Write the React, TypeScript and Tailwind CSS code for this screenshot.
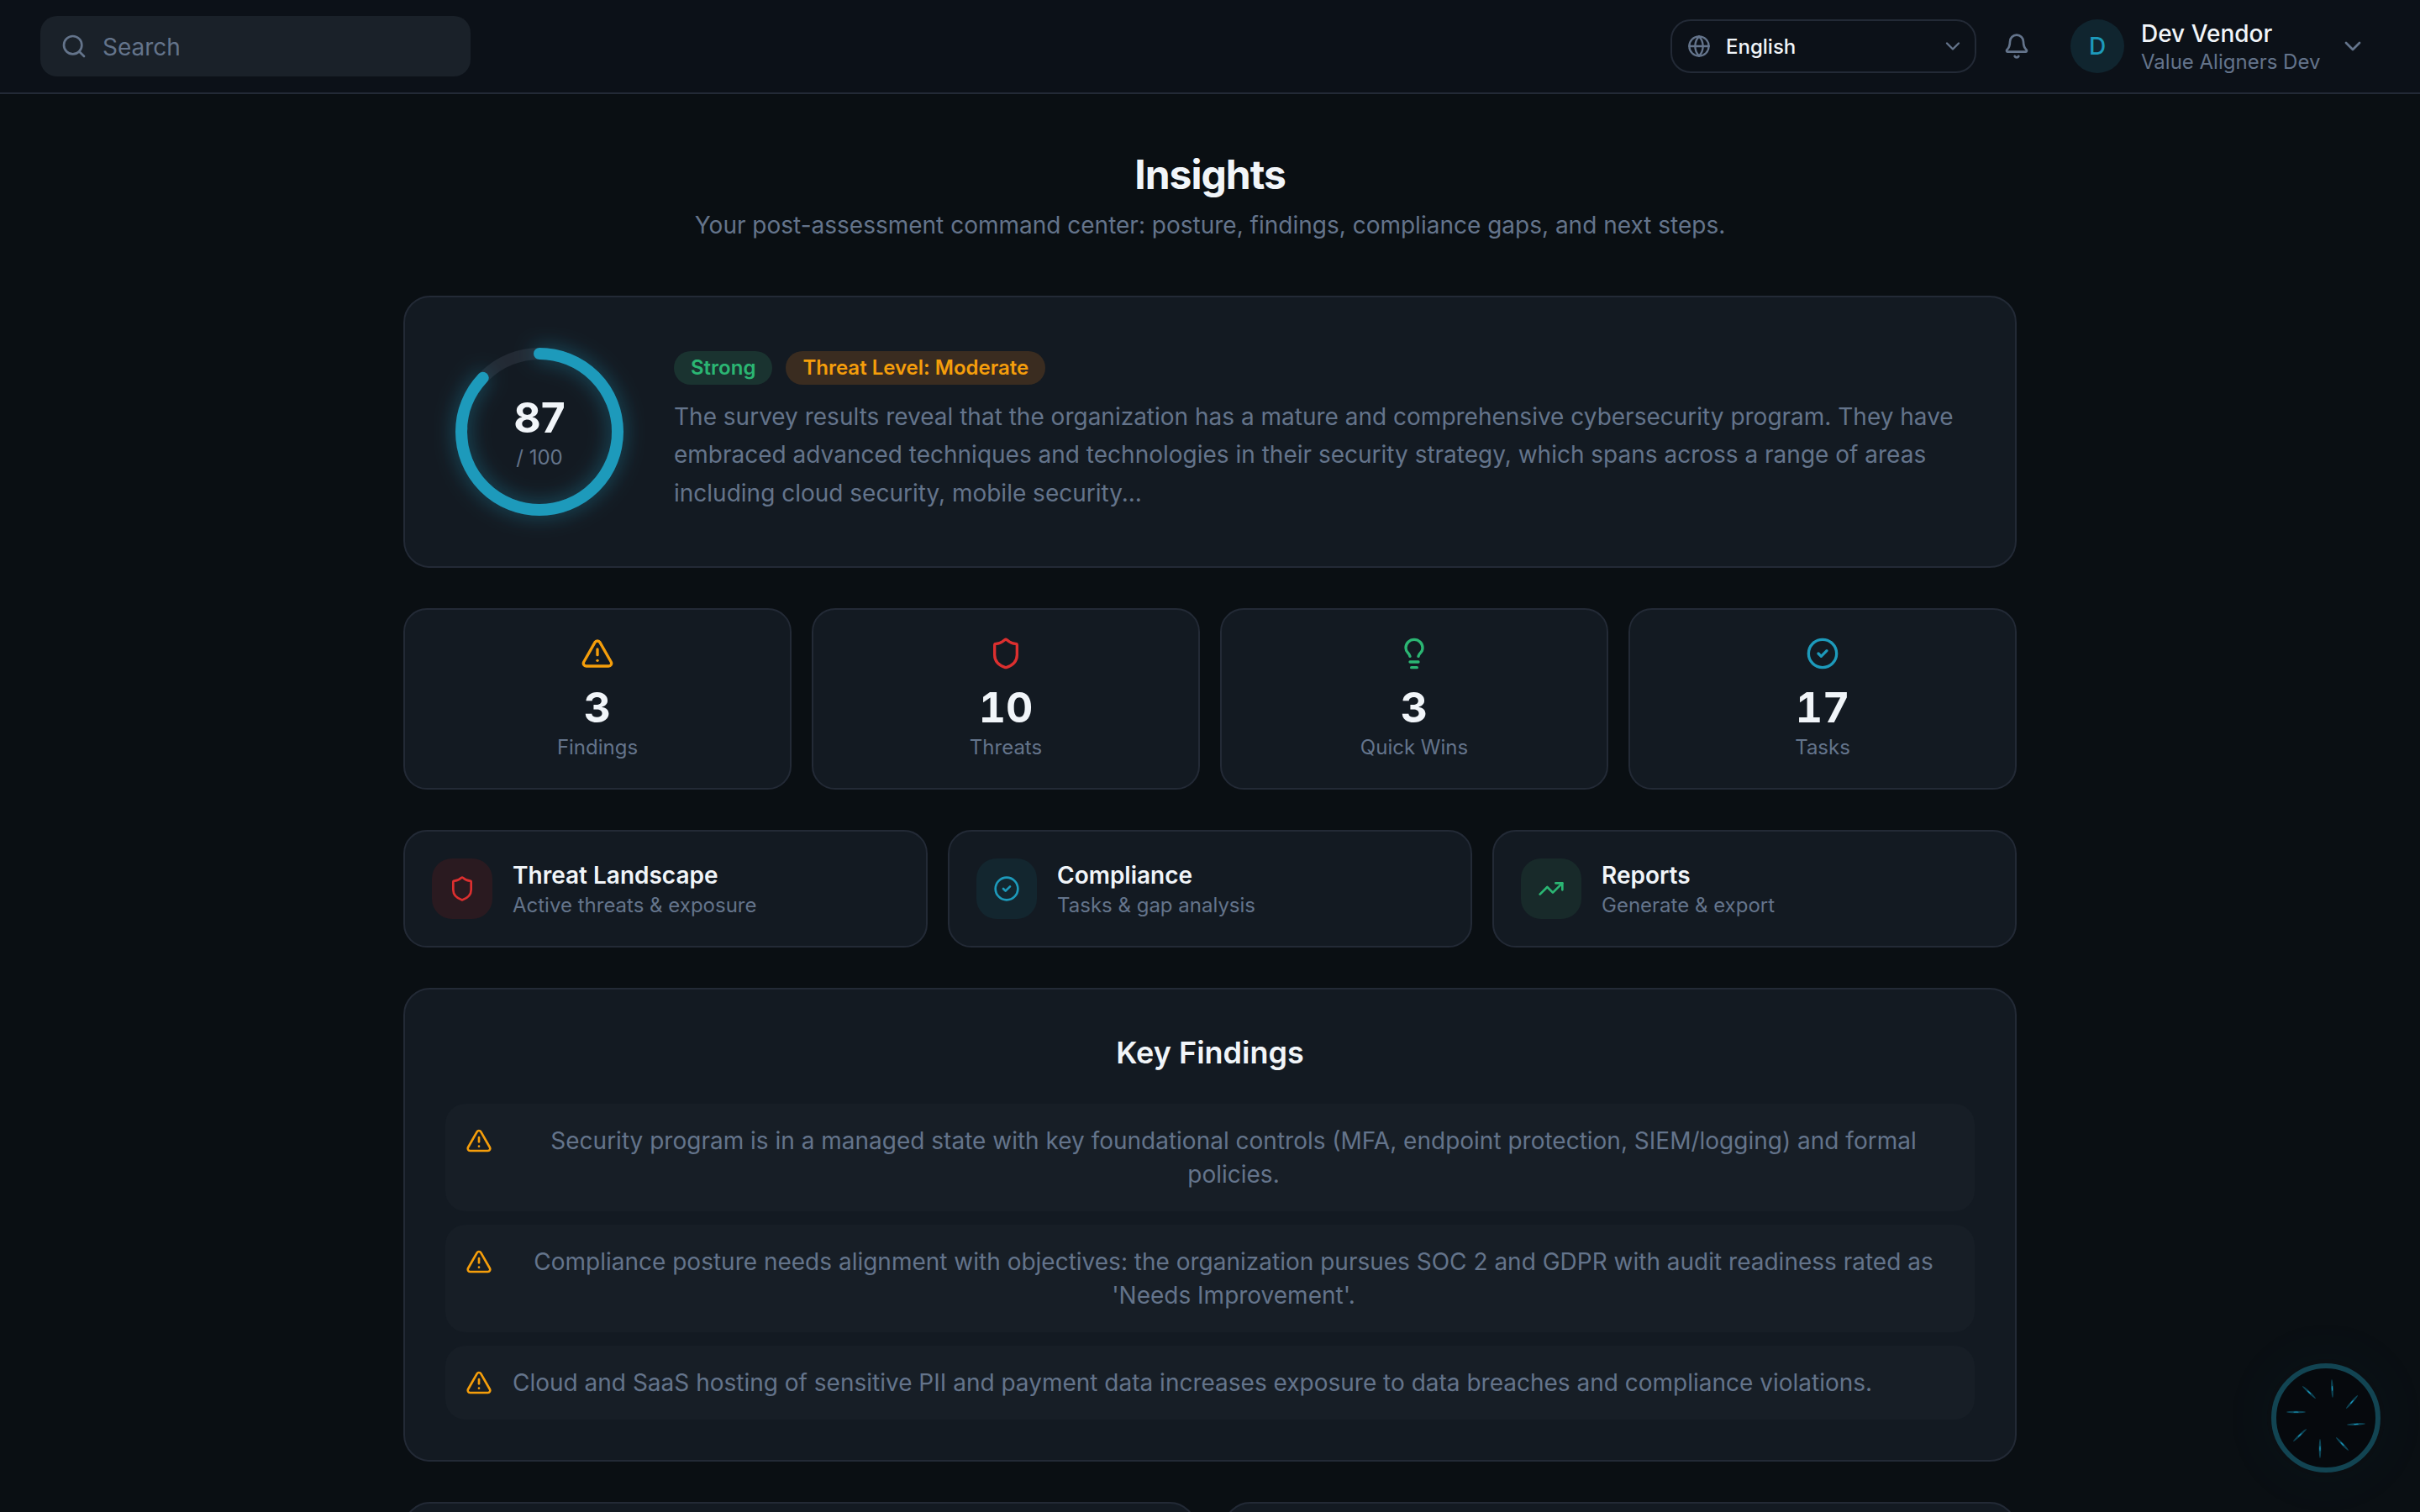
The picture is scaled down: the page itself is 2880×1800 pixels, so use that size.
import { Bell, ChevronDown, CircleCheck, Globe, Lightbulb, Search, Shield, TrendingUp, TriangleAlert } from 'lucide-react'

const STATS = [
  { icon: TriangleAlert, color: 'text-[#f59e0b]', value: '3', label: 'Findings' },
  { icon: Shield, color: 'text-[#dc2f2f]', value: '10', label: 'Threats' },
  { icon: Lightbulb, color: 'text-[#2bb673]', value: '3', label: 'Quick Wins' },
  { icon: CircleCheck, color: 'text-[#1d9abb]', value: '17', label: 'Tasks' },
]

const LINKS = [
  { icon: Shield, color: 'text-[#dc2f2f]', tile: 'bg-[#2a1a20]', title: 'Threat Landscape', sub: 'Active threats & exposure' },
  { icon: CircleCheck, color: 'text-[#1d9abb]', tile: 'bg-[#13262f]', title: 'Compliance', sub: 'Tasks & gap analysis' },
  { icon: TrendingUp, color: 'text-[#2bb673]', tile: 'bg-[#182a2a]', title: 'Reports', sub: 'Generate & export' },
]

const FINDINGS = [
  'Security program is in a managed state with key foundational controls (MFA, endpoint protection, SIEM/logging) and formal policies.',
  "Compliance posture needs alignment with objectives: the organization pursues SOC 2 and GDPR with audit readiness rated as 'Needs Improvement'.",
  'Cloud and SaaS hosting of sensitive PII and payment data increases exposure to data breaches and compliance violations.',
]

// rays of the loading orb, [x1, y1, x2, y2] around a 140 box
const RAYS = [
  [77, 24, 78, 46],
  [42, 32, 58, 47],
  [108, 43, 94, 59],
  [23, 63, 46, 63],
  [117, 77, 95, 78],
  [47, 83, 31, 98],
  [82, 93, 97, 109],
  [63, 95, 63, 118],
]

function ScoreRing() {
  const r = 93
  const c = 2 * Math.PI * r
  return (
    <div className="relative h-[200px] w-[200px] shrink-0">
      <svg viewBox="0 0 200 200" className="h-full w-full -rotate-90 overflow-visible">
        <circle cx="100" cy="100" r={r} fill="none" stroke="#232a34" strokeWidth="14" />
        <circle
          cx="100"
          cy="100"
          r={r}
          fill="none"
          stroke="#1d9abb"
          strokeWidth="14"
          strokeLinecap="round"
          strokeDasharray={`${c * 0.87} ${c}`}
          className="drop-shadow-[0_0_12px_rgba(29,154,187,0.5)]"
        />
      </svg>
      <div className="absolute inset-0 flex flex-col items-center justify-center pt-[2px]">
        <span className="text-[50px] leading-[60px] font-bold text-[#f1f5f9]">87</span>
        <span className="text-[24px] leading-[36px] text-[#64748b]">/ 100</span>
      </div>
    </div>
  )
}

function LoadingOrb() {
  return (
    <div className="fixed right-[42px] bottom-[42px] h-[140px] w-[140px] rounded-full shadow-[0_0_80px_rgba(27,155,192,0.04)]">
      <svg viewBox="0 0 140 140" className="h-full w-full">
        <circle cx="70" cy="70" r="62" fill="#06090d" stroke="#124452" strokeWidth="6" />
        {RAYS.map(([x1, y1, x2, y2], i) => {
          const cx = (x1 + x2) / 2
          const cy = (y1 + y2) / 2
          const len = Math.hypot(x2 - x1, y2 - y1)
          const deg = (Math.atan2(y2 - y1, x2 - x1) * 180) / Math.PI
          return (
            <g key={i} transform={`rotate(${deg} ${cx} ${cy})`}>
              <ellipse cx={cx} cy={cy} rx={len / 2} ry="1.3" fill="#0d4455" />
              <ellipse cx={cx} cy={cy} rx={len / 7} ry="0.6" fill="#1b9bc0" />
            </g>
          )
        })}
      </svg>
    </div>
  )
}

export default function App() {
  return (
    <div className="h-screen overflow-hidden bg-[#0a0f13] font-['Inter',sans-serif] text-[28px]">
      <header className="flex h-[112px] items-center justify-between border-b-2 border-[#232a36] bg-[#0c1118] px-[48px]">
        <div className="flex h-[72px] w-[512px] items-center gap-[18px] rounded-[20px] bg-[#1a2129] pl-[24px] text-[#64748b]">
          <Search className="h-[32px] w-[32px]" />
          <span className="pt-[2px]">Search</span>
        </div>
        <div className="flex items-center gap-[18px]">
          <div className="flex h-[64px] w-[364px] items-center rounded-[24px] border-2 border-[#232a36] pr-[12px] pl-[18px]">
            <Globe className="h-[28px] w-[28px] text-[#64748b]" />
            <span className="ml-[18px] pt-[1px] text-[24px] font-medium text-[#f1f5f9]">English</span>
            <ChevronDown className="ml-auto h-[28px] w-[28px] text-[#64748b]" />
          </div>
          <div className="flex h-[60px] w-[60px] items-center justify-center text-[#64748b]">
            <Bell className="h-[32px] w-[32px]" />
          </div>
          <div className="flex items-center gap-[20px] px-[16px]">
            <div className="flex h-[64px] w-[64px] items-center justify-center rounded-full bg-[#10252f] text-[28px] font-medium text-[#1d9abb]">
              D
            </div>
            <div className="w-[216px] whitespace-nowrap pt-[2px]">
              <div className="text-[28px] leading-[36px] font-medium text-[#f1f5f9]">Dev Vendor</div>
              <div className="text-[24px] leading-[32px] text-[#64748b]">Value Aligners Dev</div>
            </div>
            <ChevronDown className="h-[32px] w-[32px] text-[#64748b]" />
          </div>
        </div>
      </header>

      <main className="mx-auto w-[1920px] pt-[64px]">
        <div className="mb-[64px] text-center">
          <h1 className="text-[48px] leading-[64px] font-bold tracking-[-1px] text-[#f1f5f9]">Insights</h1>
          <p className="mt-[8px] text-[28px] leading-[40px] text-[#64748b]">
            Your post-assessment command center: posture, findings, compliance gaps, and next steps.
          </p>
        </div>

        <section className="flex items-center gap-[60px] rounded-[32px] border-2 border-[#232a36] bg-[#131a22] p-[60px]">
          <ScoreRing />
          <div className="min-w-0 flex-1">
            <div className="flex gap-[16px] text-[24px] leading-[32px] font-semibold">
              <span className="rounded-full bg-[#1a3330] px-[20px] py-[4px] text-[#2bb673]">Strong</span>
              <span className="rounded-full bg-[#3a2c20] px-[20px] py-[4px] text-[#f59e0b]">Threat Level: Moderate</span>
            </div>
            <p className="mt-[16px] text-[28px] leading-[45.5px] text-[#64748b]">
              The survey results reveal that the organization has a mature and comprehensive cybersecurity program. They have embraced advanced techniques and technologies in their security strategy, which spans across a range of areas including cloud security, mobile security...
            </p>
          </div>
        </section>

        <section className="mt-[48px] grid grid-cols-4 gap-[24px]">
          {STATS.map((s) => (
            <div key={s.label} className="flex h-[216px] flex-col items-center rounded-[28px] border-2 border-[#232a36] bg-[#131a22] pt-[32px]">
              <s.icon className={`h-[40px] w-[40px] ${s.color}`} />
              <div className="mt-[14px] text-[50px] leading-[60px] font-bold text-[#f1f5f9] tabular-nums">{s.value}</div>
              <div className="text-[24px] leading-[36px] text-[#64748b]">{s.label}</div>
            </div>
          ))}
        </section>

        <section className="mt-[48px] grid grid-cols-3 gap-[24px]">
          {LINKS.map((l) => (
            <div key={l.title} className="flex items-center gap-[24px] rounded-[28px] border-2 border-[#232a36] bg-[#131a22] p-[32px]">
              <div className={`flex h-[72px] w-[72px] items-center justify-center rounded-[24px] ${l.tile}`}>
                <l.icon className={`h-[32px] w-[32px] ${l.color}`} />
              </div>
              <div>
                <div className="text-[28px] leading-[40px] font-semibold text-[#f1f5f9]">{l.title}</div>
                <div className="text-[24px] leading-[32px] text-[#64748b]">{l.sub}</div>
              </div>
            </div>
          ))}
        </section>

        <section className="mt-[48px] rounded-[32px] border-2 border-[#232a36] bg-[#131a22] p-[48px] text-center">
          <h2 className="text-[36px] leading-[54px] font-semibold text-[#f1f5f9]">Key Findings</h2>
          <div className="mt-[34px] flex flex-col gap-[16px]">
            {FINDINGS.map((f) => (
              <div key={f} className="flex gap-[24px] rounded-[24px] bg-[#171e26] p-[24px] leading-[40px] text-[#64748b]">
                <TriangleAlert className="mt-[4px] h-[32px] w-[32px] shrink-0 text-[#f59e0b]" />
                <span>{f}</span>
              </div>
            ))}
          </div>
        </section>

        <section className="mt-[48px] grid grid-cols-2 gap-[32px]">
          <div className="h-[300px] rounded-[32px] border-2 border-[#232a36] bg-[#131a22]" />
          <div className="h-[300px] rounded-[32px] border-2 border-[#232a36] bg-[#131a22]" />
        </section>
      </main>

      <LoadingOrb />
    </div>
  )
}
